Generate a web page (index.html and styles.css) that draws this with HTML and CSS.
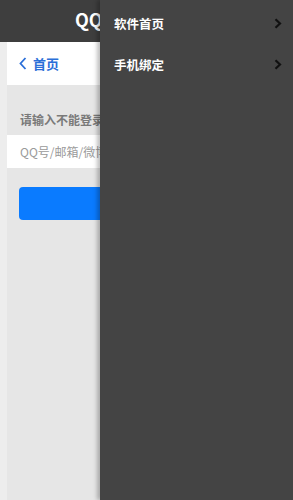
FILE: index.html
```html
<!DOCTYPE html>
<html>
<head>
    <title>QQ安全中心</title>
    <link rel="stylesheet" href="styles.css">
</head>
<body>
    <div class="page">
        <header class="topbar">
            <h1>QQ安全中心</h1>
        </header>

        <div class="main">
            <div class="navbar">
                <a class="back" href="#">
                    <svg width="8" height="13" viewBox="0 0 8 13"><polyline points="6.5,1 1.5,6.5 6.5,12" fill="none" stroke="#2b6fd8" stroke-width="1.8"/></svg>
                    <span>首页</span>
                </a>
            </div>

            <p class="label">请输入不能登录的QQ帐号</p>
            <div class="field">
                <input type="text" placeholder="QQ号/邮箱/微博帐号">
            </div>
            <div class="actions">
                <button class="btn">下一步</button>
            </div>
        </div>
    </div>

    <nav class="drawer">
        <a class="drawer_item" href="#">
            <span>软件首页</span>
            <svg width="8" height="11" viewBox="0 0 8 11"><polyline points="1.5,1.2 6,5.5 1.5,9.8" fill="none" stroke="#111" stroke-width="2.2"/></svg>
        </a>
        <a class="drawer_item" href="#">
            <span>手机绑定</span>
            <svg width="8" height="11" viewBox="0 0 8 11"><polyline points="1.5,1.2 6,5.5 1.5,9.8" fill="none" stroke="#111" stroke-width="2.2"/></svg>
        </a>
    </nav>
</body>
</html>
```

FILE: styles.css
```css
body {
    font-family: "Noto Sans CJK SC", "Liberation Sans", sans-serif;
    background-color: #ededed;
    margin: 0;
    padding: 0;
    height: 500px;
    overflow: hidden;
}

.page {
    width: 293px;
    height: 500px;
}

.topbar {
    background-color: #3e3e3e;
    height: 42px;
    box-sizing: border-box;
    display: flex;
    align-items: center;
    padding: 0 0 5px 75px;
}

.topbar h1 {
    margin: 0;
    color: #fff;
    font-size: 18px;
    font-weight: bold;
    line-height: 1;
    white-space: nowrap;
}

.main {
    margin-left: 7px;
    background-color: #e6e6e6;
    height: 458px;
}

.navbar {
    background-color: #fff;
    height: 43px;
    display: flex;
    align-items: center;
    padding-left: 12px;
}

.back {
    display: flex;
    align-items: center;
    gap: 6px;
    color: #2b6fd8;
    text-decoration: none;
    font-size: 13px;
    font-weight: bold;
}

.label {
    margin: 0;
    padding: 26px 0 0 13px;
    height: 24px;
    color: #7a7a7a;
    font-size: 12px;
    font-weight: bold;
    white-space: nowrap;
}

.field {
    background-color: #fff;
    height: 33px;
    display: flex;
    align-items: center;
}

.field input {
    border: none;
    outline: none;
    background: transparent;
    padding: 0 0 0 13px;
    font-family: inherit;
    font-size: 12px;
    width: 200px;
}

.field input::placeholder {
    color: #9a9a9a;
}

.actions {
    padding: 19px 12px 0 12px;
}

.btn {
    display: block;
    width: 100%;
    height: 33px;
    border: none;
    border-radius: 4px;
    background-color: #0a7bff;
    color: #fff;
    font-family: inherit;
    font-size: 14px;
}

.drawer {
    position: absolute;
    top: 0;
    right: 0;
    width: 193px;
    height: 500px;
    background-color: #444;
    box-shadow: -3px 0 4px rgba(0, 0, 0, 0.25);
    padding-top: 3px;
    box-sizing: border-box;
}

.drawer_item {
    display: flex;
    align-items: center;
    justify-content: space-between;
    height: 41px;
    padding: 0 11px 0 14px;
    color: #fff;
    text-decoration: none;
    font-size: 12.5px;
    font-weight: bold;
}
```
